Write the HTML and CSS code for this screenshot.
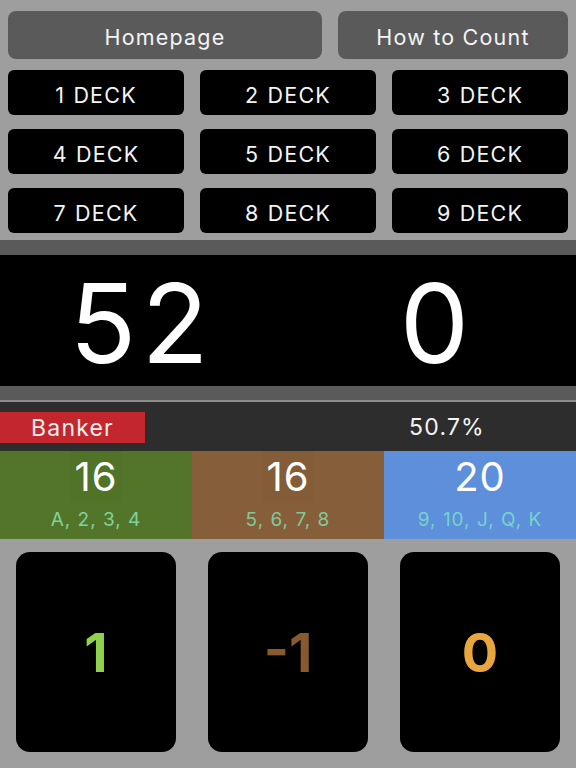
FILE: index.html
```html
<!DOCTYPE html>
<html lang="en">

<head>
    <meta charset="UTF-8">
    <title>Baccarat Counter</title>
    <link rel="stylesheet" href="styles.css">
</head>

<body>
    <div class="app">

        <div class="nav">
            <button class="nav__button nav__button--home">Homepage</button>
            <button class="nav__button nav__button--help">How to Count</button>
        </div>

        <div class="decks">
            <button class="deck">1 DECK</button>
            <button class="deck">2 DECK</button>
            <button class="deck">3 DECK</button>
            <button class="deck">4 DECK</button>
            <button class="deck">5 DECK</button>
            <button class="deck">6 DECK</button>
            <button class="deck">7 DECK</button>
            <button class="deck">8 DECK</button>
            <button class="deck">9 DECK</button>
        </div>

        <div class="counter">
            <div class="counter__board">
                <div class="counter__value">52</div>
                <div class="counter__value counter__value--right">0</div>
            </div>
        </div>
        <div class="divider"></div>

        <div class="status">
            <div class="status__tag">Banker</div>
            <div class="status__rate">50.7%</div>
        </div>

        <div class="groups">
            <div class="group group--low">
                <div class="group__count">16</div>
                <div class="group__cards">A, 2, 3, 4</div>
            </div>
            <div class="group group--mid">
                <div class="group__count">16</div>
                <div class="group__cards">5, 6, 7, 8</div>
            </div>
            <div class="group group--high">
                <div class="group__count">20</div>
                <div class="group__cards">9, 10, J, Q, K</div>
            </div>
        </div>

        <div class="pads">
            <button class="pad pad--plus">1</button>
            <button class="pad pad--minus">-1</button>
            <button class="pad pad--zero">0</button>
        </div>
    </div>
</body>

</html>
```

FILE: styles.css
```css
html {
    box-sizing: border-box;
}

*,
*:before,
*:after {
    box-sizing: inherit;
}

body {
    margin: 0;
    padding: 0;
    background: #9e9e9e;
    font-family: Inter, "Liberation Sans", sans-serif;
    color: #f4f4f4;
}

.app {
    width: 576px;
    min-height: 768px;
    background: #9e9e9e;
}

button {
    font-family: inherit;
    color: #f4f4f4;
    border: 0;
    padding: 0;
    cursor: pointer;
}

/* top buttons */
.nav {
    display: flex;
    gap: 16px;
    padding: 11px 8px 0;
}

.nav__button {
    height: 48px;
    padding-top: 3px;
    background: #5a5a5a;
    border-radius: 8px;
    font-size: 21.5px;
    letter-spacing: 1.2px;
}

.nav__button--home {
    width: 314px;
}

.nav__button--help {
    width: 230px;
}

/* deck picker */
.decks {
    display: grid;
    grid-template-columns: repeat(3, 176px);
    grid-auto-rows: 45px;
    gap: 14px 16px;
    padding: 11px 8px 0;
    margin-bottom: 7px;
}

.deck {
    padding-top: 4px;
    background: #000;
    border-radius: 6px;
    font-size: 21.5px;
    letter-spacing: 1.2px;
    word-spacing: 1px;
}

/* big counter */
.counter {
    background: #5a5a5a;
    padding: 15px 0 14px;
}

.counter__board {
    display: flex;
    height: 131px;
    background: #000;
}

.counter__value {
    flex: 1;
    display: flex;
    align-items: center;
    justify-content: center;
    padding-top: 4px;
    font-size: 110px;
    letter-spacing: 5px;
    color: #fff;
}

.counter__value--right {
    padding-left: 10px;
    letter-spacing: 0;
}

.divider {
    height: 2px;
    background: #8c8c8c;
}

/* banker / player line */
.status {
    display: flex;
    align-items: center;
    height: 49px;
    background: #2d2d2d;
}

.status__tag {
    width: 145px;
    height: 31px;
    margin-top: 1px;
    line-height: 32px;
    background: #c3262c;
    text-align: center;
    font-size: 23px;
    letter-spacing: 1.2px;
    color: #efefef;
}

.status__rate {
    width: 150px;
    margin-left: 227px;
    text-align: center;
    font-size: 23px;
    letter-spacing: 1.2px;
}

/* card groups */
.groups {
    display: flex;
    height: 88px;
}

.group {
    flex: 1;
    display: flex;
    flex-direction: column;
    align-items: center;
}

.group--low {
    background: #537529;
}

.group--mid {
    background: #865e3a;
}

.group--high {
    background: #5d8fdb;
}

.group__count {
    height: 50px;
    padding: 0 4px;
    line-height: 52px;
    font-size: 40px;
    letter-spacing: 1px;
    color: #fff;
}

.group--low .group__count {
    background: #517327;
}

.group--mid .group__count {
    background: #845c38;
}

.group__cards {
    font-size: 19px;
    line-height: 38px;
    letter-spacing: 1px;
    color: #7fd39d;
}

.group--mid .group__cards {
    color: #82c99a;
}

.group--high .group__cards {
    color: #74d3cb;
}

/* tap pads */
.pads {
    display: flex;
    gap: 32px;
    padding: 13px 16px 15px;
}

.pad {
    width: 160px;
    height: 200px;
    background: #000;
    border-radius: 14px;
    font-size: 54px;
    font-weight: 700;
}

.pad--plus {
    color: #8fd04c;
}

.pad--minus {
    color: #8a5a2f;
}

.pad--zero {
    color: #e9a63f;
}
```
